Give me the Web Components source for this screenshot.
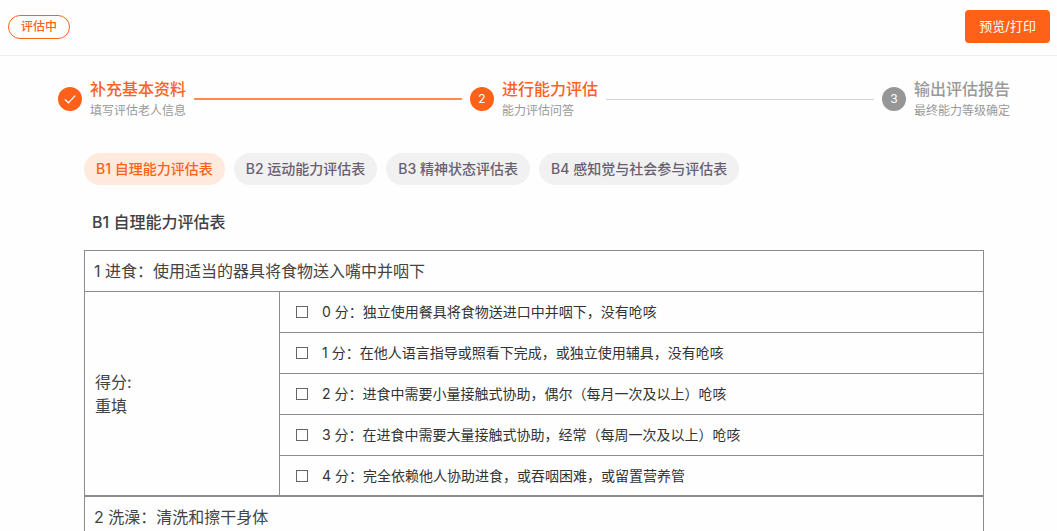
<!DOCTYPE html>
<html lang="zh-CN">
<head>
<meta charset="utf-8">
<title>能力评估</title>
<style>
  body {
    margin: 0;
    background: #fefefe;
    color: #444;
    font: 14px/20px Inter, "Noto Sans CJK SC", sans-serif;
  }
  main {
    padding: 32px 73px 24px 84px;
  }
  h2 {
    margin: 25px 8px 16px;
    font-size: 16px;
    line-height: 24px;
    font-weight: 500;
    color: #3d4348;
  }
</style>
</head>
<body>
<page-header>
  <status-badge slot="status">评估中</status-badge>
  <primary-button slot="actions">预览/打印</primary-button>
</page-header>
<step-bar>
  <step-item state="done">补充基本资料<span slot="desc">填写评估老人信息</span></step-item>
  <step-item state="active" number="2">进行能力评估<span slot="desc">能力评估问答</span></step-item>
  <step-item number="3" last>输出评估报告<span slot="desc">最终能力等级确定</span></step-item>
</step-bar>
<main>
  <tab-list>
    <tab-pill active>B1 自理能力评估表</tab-pill>
    <tab-pill>B2 运动能力评估表</tab-pill>
    <tab-pill>B3 精神状态评估表</tab-pill>
    <tab-pill>B4 感知觉与社会参与评估表</tab-pill>
  </tab-list>
  <h2>B1 自理能力评估表</h2>
  <question-table heading="1 进食：使用适当的器具将食物送入嘴中并咽下">
    <span>0 分：独立使用餐具将食物送进口中并咽下，没有呛咳</span>
    <span>1 分：在他人语言指导或照看下完成，或独立使用辅具，没有呛咳</span>
    <span>2 分：进食中需要小量接触式协助，偶尔（每月一次及以上）呛咳</span>
    <span>3 分：在进食中需要大量接触式协助，经常（每周一次及以上）呛咳</span>
    <span>4 分：完全依赖他人协助进食，或吞咽困难，或留置营养管</span>
  </question-table>
  <question-table heading="2 洗澡：清洗和擦干身体"></question-table>
</main>

<script>
class BaseElement extends HTMLElement {
    constructor() {
        super()
        this.root = this.attachShadow({ mode: 'open' })
    }

    connectedCallback() {
        this.root.innerHTML = this.render()
    }
}

class PageHeader extends BaseElement {
    render() {
        return `<style>
      :host { display: block; }
      header {
        display: flex;
        align-items: center;
        justify-content: space-between;
        padding: 10px 7px 12px 8px;
        border-bottom: 1px solid #efefef;
      }
    </style>
    <header><slot name="status"></slot><slot name="actions"></slot></header>`
    }
}

class StatusBadge extends BaseElement {
    render() {
        return `<style>
      :host {
        display: inline-block;
        padding: 0 12px;
        border: 1px solid #ff6119;
        border-radius: 12px;
        color: #ff6119;
        font-size: 12px;
        line-height: 22px;
        font-weight: 500;
      }
    </style><slot></slot>`
    }
}

class PrimaryButton extends BaseElement {
    render() {
        return `<style>
      :host { display: inline-block; }
      button {
        display: block;
        padding: 0 14px;
        border: 0;
        border-radius: 4px;
        background: #ff6119;
        color: #fff;
        font: inherit;
        font-size: 13px;
        line-height: 33px;
        cursor: pointer;
      }
    </style><button type="button"><slot></slot></button>`
    }
}

class StepBar extends BaseElement {
    render() {
        return `<style>
      :host {
        display: flex;
        gap: 8px;
        padding: 21px 47px 0 58px;
      }
    </style><slot></slot>`
    }
}

class StepItem extends BaseElement {
    render() {
        const done = this.getAttribute('state') === 'done'
        const icon = done
            ? `<svg width="14" height="14" viewBox="0 0 14 14" fill="none"><path d="M1.8 7.4 5.4 10.8 12.2 3.6" stroke="#fff" stroke-width="1.3"/></svg>`
            : this.getAttribute('number')
        return `<style>
      :host {
        display: flex;
        flex: 1 1 auto;
        align-items: center;
        gap: 8px;
        color: #999;
      }
      :host([last]) { flex: none; }
      .dot {
        display: flex;
        align-items: center;
        justify-content: center;
        width: 24px;
        height: 24px;
        border-radius: 50%;
        background: #969696;
        color: #fff;
        font-size: 12px;
      }
      .title {
        font-size: 16px;
        line-height: 24px;
        font-weight: 500;
        white-space: nowrap;
      }
      .desc {
        font-size: 12px;
        line-height: 20px;
        color: #999;
        white-space: nowrap;
      }
      .line {
        flex: 1;
        height: 1px;
        background: #d4d4d4;
      }
      :host([state]) .dot { background: #ff6119; }
      :host([state]) .title { color: #ff6119; }
      :host([state="done"]) .line { height: 2px; background: #ff894f; }
      :host([last]) .line { display: none; }
    </style>
    <div class="dot">${icon}</div>
    <div>
      <div class="title"><slot></slot></div>
      <div class="desc"><slot name="desc"></slot></div>
    </div>
    <div class="line"></div>`
    }
}

class TabList extends BaseElement {
    render() {
        return `<style>
      :host {
        display: flex;
        flex-wrap: wrap;
        gap: 9px;
      }
    </style><slot></slot>`
    }
}

class TabPill extends BaseElement {
    render() {
        return `<style>
      :host { display: block; }
      button {
        display: block;
        padding: 0 12px;
        border: 0;
        border-radius: 16px;
        background: #f1f1f1;
        color: #686070;
        font: inherit;
        font-weight: 500;
        line-height: 32px;
        cursor: pointer;
      }
      :host([active]) button {
        background: #ffeadd;
        color: #ff6119;
      }
    </style><button type="button"><slot></slot></button>`
    }
}

class QuestionTable extends BaseElement {
    /**
     * Gives each child its own slot so that it can be projected into a table row
     * @return {string}
     */
    render() {
        const options = Array.from(this.children)
        options.forEach((option, i) => {
            option.slot = `option-${i}`
        })
        return `<style>
      :host { display: block; }
      table {
        width: 100%;
        border-collapse: collapse;
        table-layout: fixed;
      }
      th, td {
        padding: 8px 10px;
        border: 1px solid #8c8c8c;
        text-align: left;
        font-size: 16px;
        line-height: 24px;
        font-weight: 400;
      }
      th { padding: 8px 9px; }
      .side { width: 195px; }
      .option {
        padding: 10px 16px;
        font-size: 14px;
        line-height: 20px;
        color: #333;
      }
      tr:last-child .option { padding-bottom: 9px; }
      label {
        display: flex;
        align-items: center;
        gap: 14px;
      }
      input {
        appearance: none;
        box-sizing: border-box;
        flex: none;
        width: 12px;
        height: 12px;
        margin: 0;
        border: 1px solid #666;
      }
      input:checked { background: #ff6119; border-color: #ff6119; }
      button {
        display: block;
        padding: 0;
        border: 0;
        background: none;
        color: inherit;
        font: inherit;
        cursor: pointer;
      }
    </style>
    <table>
      <colgroup><col class="side"><col></colgroup>
      <tr><th colspan="2">${this.getAttribute('heading')}</th></tr>
      ${options.map((option, i) => this.buildRow(i, options.length)).join('')}
    </table>`
    }

    /**
     * @param {number} i option index
     * @param {number} count options count, the score cell spans all of them
     * @return {string}
     */
    buildRow(i, count) {
        const score = `<td rowspan="${count}">得分:<button type="button">重填</button></td>`
        return `<tr>${i === 0 ? score : ''}
        <td class="option"><label><input type="checkbox"><slot name="option-${i}"></slot></label></td></tr>`
    }

    connectedCallback() {
        super.connectedCallback()
        // one answer per question, the reset button clears it
        const boxes = Array.from(this.root.querySelectorAll('input'))
        boxes.forEach(box => {
            box.addEventListener('change', () => {
                boxes.filter(b => b !== box).forEach(b => (b.checked = false))
            })
        })
        const reset = this.root.querySelector('button')
        if (reset) {
            reset.addEventListener('click', () => boxes.forEach(b => (b.checked = false)))
        }
    }
}

customElements.define('page-header', PageHeader)
customElements.define('status-badge', StatusBadge)
customElements.define('primary-button', PrimaryButton)
customElements.define('step-bar', StepBar)
customElements.define('step-item', StepItem)
customElements.define('tab-list', TabList)
customElements.define('tab-pill', TabPill)
customElements.define('question-table', QuestionTable)
</script>
</body>
</html>
